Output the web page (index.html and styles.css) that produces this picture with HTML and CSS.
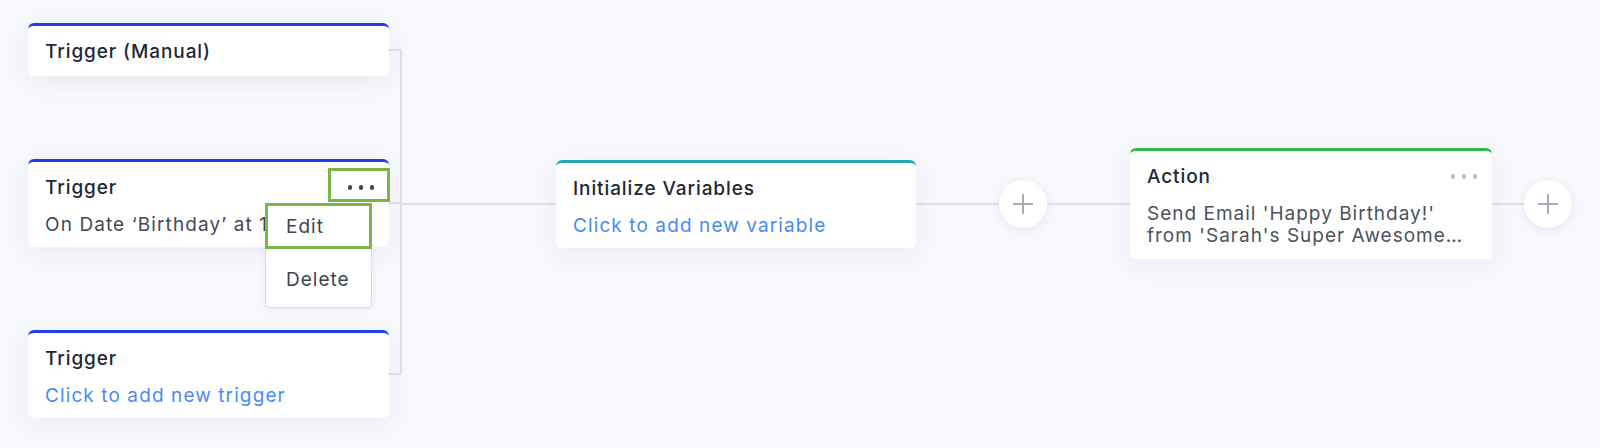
FILE: index.html
```html
<!DOCTYPE html>
<html lang="en">
<head>
<meta charset="utf-8">
<title>Workflow</title>
<link rel="stylesheet" href="styles.css">
</head>
<body>
<div class="canvas">
  <div class="triggers">
    <div class="trigger-row">
      <div class="card card--trigger card--single">
        <div class="card-title">Trigger (Manual)</div>
      </div>
      <div class="stub"></div>
    </div>
    <div class="trigger-row">
      <div class="card card--trigger">
        <div class="card-title">Trigger</div>
        <div class="card-text">On Date ‘Birthday’ at 10:00 AM</div>
        <button class="more more--dark more--annotated" type="button" aria-label="More">
          <span class="dot"></span><span class="dot"></span><span class="dot"></span>
        </button>
        <div class="menu">
          <div class="menu-item menu-item--annotated">Edit</div>
          <div class="menu-item">Delete</div>
        </div>
      </div>
      <div class="stub"></div>
    </div>
    <div class="trigger-row">
      <div class="card card--trigger">
        <div class="card-title">Trigger</div>
        <div class="card-text card-link">Click to add new trigger</div>
      </div>
      <div class="stub"></div>
    </div>
  </div>
  <div class="bracket"></div>
  <div class="flow">
    <div class="line line--long"></div>
    <div class="card card--init">
      <div class="card-title">Initialize Variables</div>
      <div class="card-text card-link">Click to add new variable</div>
    </div>
    <div class="line"></div>
    <div class="add">
      <svg width="22" height="22" viewBox="0 0 22 22"><path d="M11 1v20M1 11h20" stroke="#a3acb7" stroke-width="2" fill="none"/></svg>
    </div>
    <div class="line"></div>
    <div class="card card--action">
      <div class="card-title">Action</div>
      <div class="card-desc">Send Email 'Happy Birthday!'<br>from 'Sarah's Super Awesome…</div>
      <button class="more more--light" type="button" aria-label="More">
        <span class="dot"></span><span class="dot"></span><span class="dot"></span>
      </button>
    </div>
    <div class="line line--short"></div>
    <div class="add">
      <svg width="22" height="22" viewBox="0 0 22 22"><path d="M11 1v20M1 11h20" stroke="#a3acb7" stroke-width="2" fill="none"/></svg>
    </div>
  </div>
</div>
</body>
</html>
```

FILE: styles.css
```css
* { box-sizing: border-box; }

html, body {
  margin: 0;
  height: 100%;
  background: #f7f8fc;
  font-family: "Inter", "Lato", Arial, sans-serif;
}

.canvas {
  display: flex;
  align-items: flex-start;
  padding: 23px 0 0 28px;
}

.triggers {
  display: flex;
  flex-direction: column;
  gap: 83px;
}

.trigger-row {
  display: flex;
  align-items: center;
}

.stub {
  width: 11px;
  height: 2px;
  background: #dde0e5;
}

.bracket {
  width: 2px;
  align-self: stretch;
  margin: 26px 0 43px;
  background: #dde0e5;
}

.flow {
  display: flex;
  align-items: center;
  margin-top: 125px;
}

.line {
  width: 83px;
  height: 2px;
  background: #dde0e5;
}
.line--long { width: 154px; }
.line--short { width: 32px; }

.card {
  position: relative;
  width: 361px;
  background: #fff;
  border-radius: 6px;
  border-top: 3px solid #1f3fe6;
  box-shadow: 0 6px 24px rgba(40, 50, 100, 0.06);
  padding: 15px 17px 11px;
}
.card--single { padding-bottom: 13px; }
.card--init { width: 360px; border-top-color: #22a8b0; }
.card--action { width: 362px; border-top-color: #2dbb4a; padding-bottom: 13px; }

.card-title {
  font-size: 19px;
  line-height: 22px;
  font-weight: 500;
  letter-spacing: 0.9px;
  color: #1f2733;
}

.card-text {
  margin-top: 15px;
  font-size: 19px;
  line-height: 22px;
  letter-spacing: 1.1px;
  color: #424a55;
  white-space: nowrap;
  overflow: hidden;
}

.card-link { color: #4a8af4; }

.card-desc {
  margin-top: 15px;
  font-size: 19px;
  line-height: 21.5px;
  letter-spacing: 1px;
  color: #4a525d;
}

.more {
  position: absolute;
  top: 6px;
  right: -1px;
  width: 62px;
  height: 34px;
  display: flex;
  align-items: center;
  justify-content: center;
  gap: 6.5px;
  padding: 5px 0 0 4px;
  margin: 0;
  border: 3px solid transparent;
  background: none;
}
.more--annotated { border-color: #7ab648; }

.dot {
  width: 4.5px;
  height: 4.5px;
  border-radius: 50%;
  background: #3b4450;
}
.more--light .dot { background: #b8bfc8; }

.menu {
  position: absolute;
  left: 237px;
  top: 41px;
  width: 107px;
  background: #fff;
  border: 1px solid #d9dde2;
  border-radius: 5px;
  box-shadow: 0 2px 6px rgba(30, 40, 80, 0.06);
  z-index: 2;
}

.menu-item {
  position: relative;
  padding: 12px 20px 19px;
  font-size: 19px;
  line-height: 22px;
  letter-spacing: 1px;
  color: #3d4550;
}
.menu-item:last-child { padding-bottom: 16px; }

.menu-item--annotated::after {
  content: "";
  position: absolute;
  top: -1px;
  left: -1px;
  right: -1px;
  height: 40px;
  border: 3px solid #7ab648;
}

.add {
  width: 48px;
  height: 48px;
  flex: none;
  border-radius: 50%;
  background: #fff;
  box-shadow: 0 2px 10px rgba(30, 40, 90, 0.08);
  display: flex;
  align-items: center;
  justify-content: center;
}
```
